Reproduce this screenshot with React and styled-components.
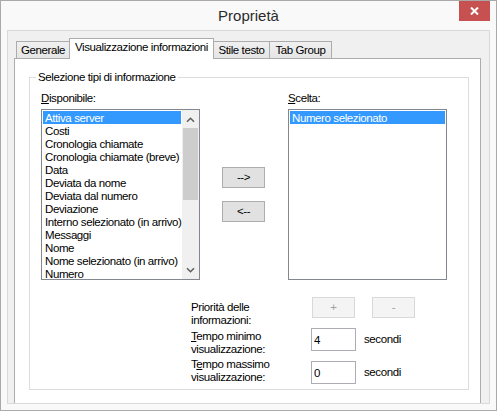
import React from "react";
import styled, { createGlobalStyle } from "styled-components";

const uiFont = `"Liberation Sans", Arial, sans-serif`;

const GlobalStyle = createGlobalStyle`
  html, body { margin: 0; padding: 0; background: #ffffff; }
  body { font-family: ${uiFont}; font-size: 11.5px; letter-spacing: -0.4px; color: #000; }
  * { box-sizing: border-box; }
`;

const Window = styled.div`
  width: 497px;
  height: 411px;
  border: 1px solid #a9a9a9;
  background: #f9f9f9;
  padding: 0 6px 6px;
  display: flex;
  flex-direction: column;
`;

const TitleBar = styled.div`
  height: 29px;
  flex-shrink: 0;
  display: grid;
  grid-template-columns: 1fr auto 1fr;
  align-items: start;
`;

const Title = styled.div`
  grid-column: 2;
  font-size: 15px;
  letter-spacing: 0;
  line-height: 29px;
  color: #2b2b2b;
`;

const CloseButton = styled.div`
  grid-column: 3;
  justify-self: end;
  width: 31px;
  height: 20px;
  background: #c75050;
  display: flex;
  align-items: center;
  justify-content: center;
`;

const Client = styled.div`
  flex: 1;
  display: flex;
  flex-direction: column;
  background: #f0f0f0;
  border: 1px solid #d9d9d9;
  padding: 7px 8px 0 6px;
`;

const TabRow = styled.div`
  display: flex;
  align-items: flex-end;
  height: 20px;
  padding-left: 2px;
  position: relative;
  z-index: 1;
`;

const Tab = styled.div`
  width: ${(p) => p.$w}px;
  height: ${(p) => (p.$active ? 21 : 17)}px;
  margin-bottom: ${(p) => (p.$active ? -1 : 0)}px;
  border: 1px solid #acacac;
  border-bottom: none;
  background: ${(p) => (p.$active ? "#ffffff" : "linear-gradient(#f0f0f0, #e5e5e5)")};
  text-align: center;
  line-height: 16px;
  white-space: nowrap;
  position: relative;
  z-index: ${(p) => (p.$active ? 2 : 1)};

  & + & {
    margin-left: -1px;
  }
`;

const Panel = styled.div`
  flex: 1;
  background: #ffffff;
  border: 1px solid #acacac;
  border-bottom: none;
  padding: 11px 0 0 14px;
`;

const GroupBox = styled.fieldset`
  margin: 0;
  padding: 0;
  min-width: 0;
  width: 440px;
  height: 320px;
  border: 1px solid #dcdcdc;
`;

const Legend = styled.legend`
  margin-left: 6px;
  padding: 0 2px;
  line-height: 14px;
`;

const GroupBody = styled.div`
  padding: 7px 0 0 11px;
`;

const ListsRow = styled.div`
  display: flex;
  align-items: flex-start;
`;

const ListColumn = styled.div`
  display: flex;
  flex-direction: column;
  margin-left: ${(p) => p.$gap || 0}px;
`;

const ColumnLabel = styled.div`
  height: 14px;
  line-height: 14px;
  margin-bottom: 4px;
`;

const ListBox = styled.div`
  width: 159px;
  height: 171px;
  border: 1px solid #828790;
  background: #ffffff;
  display: flex;
  overflow: hidden;
`;

const Items = styled.div`
  flex: 1;
  min-width: 0;
  padding: 1px;
  overflow: hidden;
`;

const Item = styled.div`
  height: 13px;
  line-height: 14px;
  padding-left: 2px;
  white-space: nowrap;
  background: ${(p) => (p.$selected ? "#3399ff" : "transparent")};
  color: ${(p) => (p.$selected ? "#ffffff" : "#000000")};
`;

const ScrollBar = styled.div`
  width: 17px;
  flex-shrink: 0;
  background: #f0f0f0;
  display: flex;
  flex-direction: column;
`;

const ScrollArrow = styled.div`
  height: 17px;
  display: flex;
  justify-content: center;
  align-items: center;
  padding-top: ${(p) => (p.$down ? 0 : 3)}px;
  padding-bottom: ${(p) => (p.$down ? 2 : 0)}px;
`;

const ScrollTrack = styled.div`
  flex: 1;
  padding: 1px 1px 0;
`;

const Thumb = styled.div`
  height: 72px;
  background: #cdcdcd;
`;

const MoveButtons = styled.div`
  display: flex;
  flex-direction: column;
  gap: 13px;
  padding-top: 76px;
  margin-left: 22px;
`;

const PushButton = styled.button`
  width: 43px;
  height: 21px;
  padding: 0;
  margin: 0 0 0 ${(p) => p.$gap || 0}px;
  border-radius: 0;
  font: inherit;
  letter-spacing: inherit;
  line-height: 19px;
  border: 1px solid ${(p) => (p.disabled ? "#d9d9d9" : "#adadad")};
  background: ${(p) => (p.disabled ? "#f4f4f4" : "#e1e1e1")};
  color: ${(p) => (p.disabled ? "#a0a0a0" : "#000000")};
`;

const Settings = styled.div`
  margin: 17px 0 0 150px;
  display: flex;
  flex-direction: column;
`;

const SettingRow = styled.div`
  display: flex;
  align-items: flex-start;
  height: ${(p) => p.$h}px;
`;

const SettingLabel = styled.div`
  width: 120px;
  line-height: 13px;
  margin-top: ${(p) => p.$offset || 0}px;
`;

const NumberField = styled.input`
  width: 45px;
  height: 23px;
  margin: ${(p) => p.$offset || 0}px 0 0;
  padding: 0 0 0 2px;
  border: 1px solid #abadb3;
  border-radius: 0;
  background: #ffffff;
  color: #000000;
  font: inherit;
  letter-spacing: inherit;
  outline: none;
`;

const Unit = styled.div`
  margin: ${(p) => p.$offset || 0}px 0 0 8px;
  line-height: 23px;
`;

const available = [
  "Attiva server",
  "Costi",
  "Cronologia chiamate",
  "Cronologia chiamate (breve)",
  "Data",
  "Deviata da nome",
  "Deviata dal numero",
  "Deviazione",
  "Interno selezionato (in arrivo)",
  "Messaggi",
  "Nome",
  "Nome selezionato (in arrivo)",
  "Numero",
];

const chosen = ["Numero selezionato"];

const tabs = [
  { label: "Generale", w: 54 },
  { label: "Visualizzazione informazioni", w: 145, active: true },
  { label: "Stile testo", w: 57 },
  { label: "Tab Group", w: 63 },
];

const Chevron = ({ down }) => (
  <svg width="9" height="6" viewBox="0 0 9 6">
    <path
      d={down ? "M1 1.2 L4.5 4.7 L8 1.2" : "M1 4.8 L4.5 1.3 L8 4.8"}
      fill="none"
      stroke="#606060"
      strokeWidth="1.6"
    />
  </svg>
);

const List = ({ items, selected, scroll }) => (
  <ListBox>
    <Items>
      {items.map((it) => (
        <Item key={it} $selected={it === selected}>
          {it}
        </Item>
      ))}
    </Items>
    {scroll && (
      <ScrollBar>
        <ScrollArrow>
          <Chevron />
        </ScrollArrow>
        <ScrollTrack>
          <Thumb />
        </ScrollTrack>
        <ScrollArrow $down>
          <Chevron down />
        </ScrollArrow>
      </ScrollBar>
    )}
  </ListBox>
);

const App = () => {
  return (
    <>
      <GlobalStyle />
      <Window>
        <TitleBar>
          <Title>Proprietà</Title>
          <CloseButton>
            <svg width="9" height="8" viewBox="0 0 9 8">
              <path d="M1 0.5 L8 7.5 M8 0.5 L1 7.5" stroke="#ffffff" strokeWidth="2" />
            </svg>
          </CloseButton>
        </TitleBar>
        <Client>
          <TabRow>
            {tabs.map((t) => (
              <Tab key={t.label} $w={t.w} $active={t.active}>
                {t.label}
              </Tab>
            ))}
          </TabRow>
          <Panel>
            <GroupBox>
              <Legend>Selezione tipi di informazione</Legend>
              <GroupBody>
                <ListsRow>
                  <ListColumn>
                    <ColumnLabel>
                      <u>D</u>isponibile:
                    </ColumnLabel>
                    <List items={available} selected="Attiva server" scroll />
                  </ListColumn>
                  <MoveButtons>
                    <PushButton>--&gt;</PushButton>
                    <PushButton>&lt;--</PushButton>
                  </MoveButtons>
                  <ListColumn $gap={23}>
                    <ColumnLabel>
                      <u>S</u>celta:
                    </ColumnLabel>
                    <List items={chosen} selected="Numero selezionato" />
                  </ListColumn>
                </ListsRow>

                <Settings>
                  <SettingRow $h={31}>
                    <SettingLabel $offset={4}>
                      Priorità delle
                      <br />
                      informazioni:
                    </SettingLabel>
                    <PushButton disabled $gap={1}>+</PushButton>
                    <PushButton disabled $gap={17}>-</PushButton>
                  </SettingRow>
                  <SettingRow $h={29}>
                    <SettingLabel $offset={2}>
                      <u>T</u>empo minimo
                      <br />
                      visualizzazione:
                    </SettingLabel>
                    <NumberField defaultValue="4" />
                    <Unit>secondi</Unit>
                  </SettingRow>
                  <SettingRow $h={30}>
                    <SettingLabel $offset={1}>
                      T<u>e</u>mpo massimo
                      <br />
                      visualizzazione:
                    </SettingLabel>
                    <NumberField defaultValue="0" $offset={4} />
                    <Unit $offset={4}>secondi</Unit>
                  </SettingRow>
                </Settings>
              </GroupBody>
            </GroupBox>
          </Panel>
        </Client>
      </Window>
    </>
  );
};

export default App;
